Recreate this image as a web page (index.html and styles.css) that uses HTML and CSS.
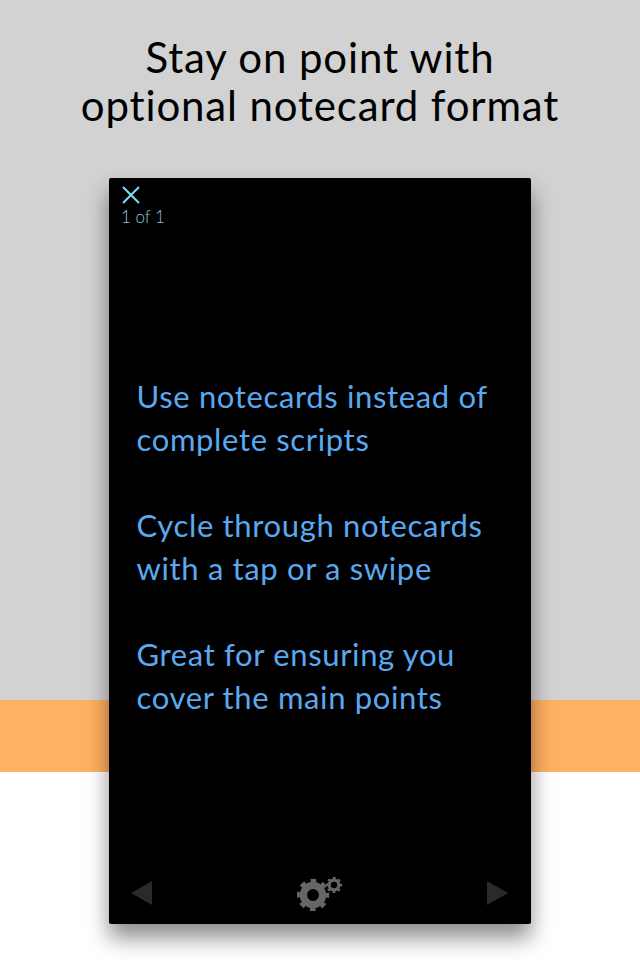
FILE: index.html
```html
<!DOCTYPE html>
<html lang="en">
<head>
    <meta charset="UTF-8">
    <meta name="viewport" content="width=device-width, initial-scale=1.0">
    <title>Notecards</title>
    <link rel="stylesheet" href="styles.css">
</head>
<body>
<header class="headline">Stay on point with<br>optional notecard format</header>

<div class="phone">
    <div class="topbar">
        <svg class="close" width="20" height="18" viewBox="0 0 20 18">
            <path d="M2 1 L18 17 M18 1 L2 17" />
        </svg>
        <div class="counter">1 of 1</div>
    </div>

    <div class="card-text">
        <p>Use notecards instead of<br>complete scripts</p>
        <p>Cycle through notecards<br>with a tap or a swipe</p>
        <p>Great for ensuring you<br>cover the main points</p>
    </div>

    <div class="toolbar">
        <svg class="arrow" width="22" height="24" viewBox="0 0 22 24">
            <path d="M0 12 L21 0 V24 Z" />
        </svg>
        <!-- gears: dashed stroke makes the teeth, offset puts one on top -->
        <svg class="gears" width="46" height="36" viewBox="0 0 46 36">
            <circle class="gear-body" cx="16" cy="20" r="9.6" stroke-width="7.2" />
            <circle class="gear-teeth" cx="16" cy="20" r="14" stroke-width="4.4" stroke-dasharray="5.5 5.5" stroke-dashoffset="2.75" />
            <circle class="gear-body" cx="37" cy="10" r="4.8" stroke-width="3.2" />
            <circle class="gear-teeth" cx="37" cy="10" r="6.9" stroke-width="2.4" stroke-dasharray="2.71 2.71" stroke-dashoffset="1.35" />
        </svg>
        <svg class="arrow" width="22" height="24" viewBox="0 0 22 24">
            <path d="M22 12 L1 0 V24 Z" />
        </svg>
    </div>
</div>
</body>
</html>
```

FILE: styles.css
```css
body {
    margin: 0;
    height: 960px;
    overflow: hidden;
    background: linear-gradient(#d2d2d2 700px, #ffb062 700px, #ffb062 772px, #ffffff 772px);
    font-family: 'Lato', sans-serif;
}

.headline {
    padding-top: 33px;
    height: 178px;
    box-sizing: border-box;
    font-size: 42px;
    line-height: 48px;
    letter-spacing: 0.85px;
    text-align: center;
    color: #000000;
}

.phone {
    display: flex;
    flex-direction: column;
    width: 422px;
    height: 746px;
    margin: 0 auto;
    background-color: #000000;
    border-radius: 2px;
    box-shadow: 0 14px 22px rgba(0, 0, 0, 0.45);
}

.topbar {
    height: 197px;
    padding: 8px 0 0 12px;
    box-sizing: border-box;
}

.close {
    display: block;
    fill: none;
    stroke: #7fdcf8;
    stroke-width: 2;
}

.counter {
    margin-top: 3px;
    font-size: 17px;
    line-height: 20px;
    font-weight: 300;
    color: #8cc4dc;
}

.card-text {
    flex: 1;
    padding-left: 27.5px;
    font-size: 31px;
    line-height: 43px;
    letter-spacing: 0.65px;
    color: #5aa9f0;
}

.card-text p {
    margin: 0 0 43px 0;
}

.toolbar {
    display: flex;
    justify-content: space-between;
    align-items: center;
    height: 62px;
    padding: 0 23px 0 22px;
}

.arrow {
    fill: #2a2a2a;
}

.gears {
    fill: none;
}

.gear-body,
.gear-teeth {
    stroke: #666666;
}
```
